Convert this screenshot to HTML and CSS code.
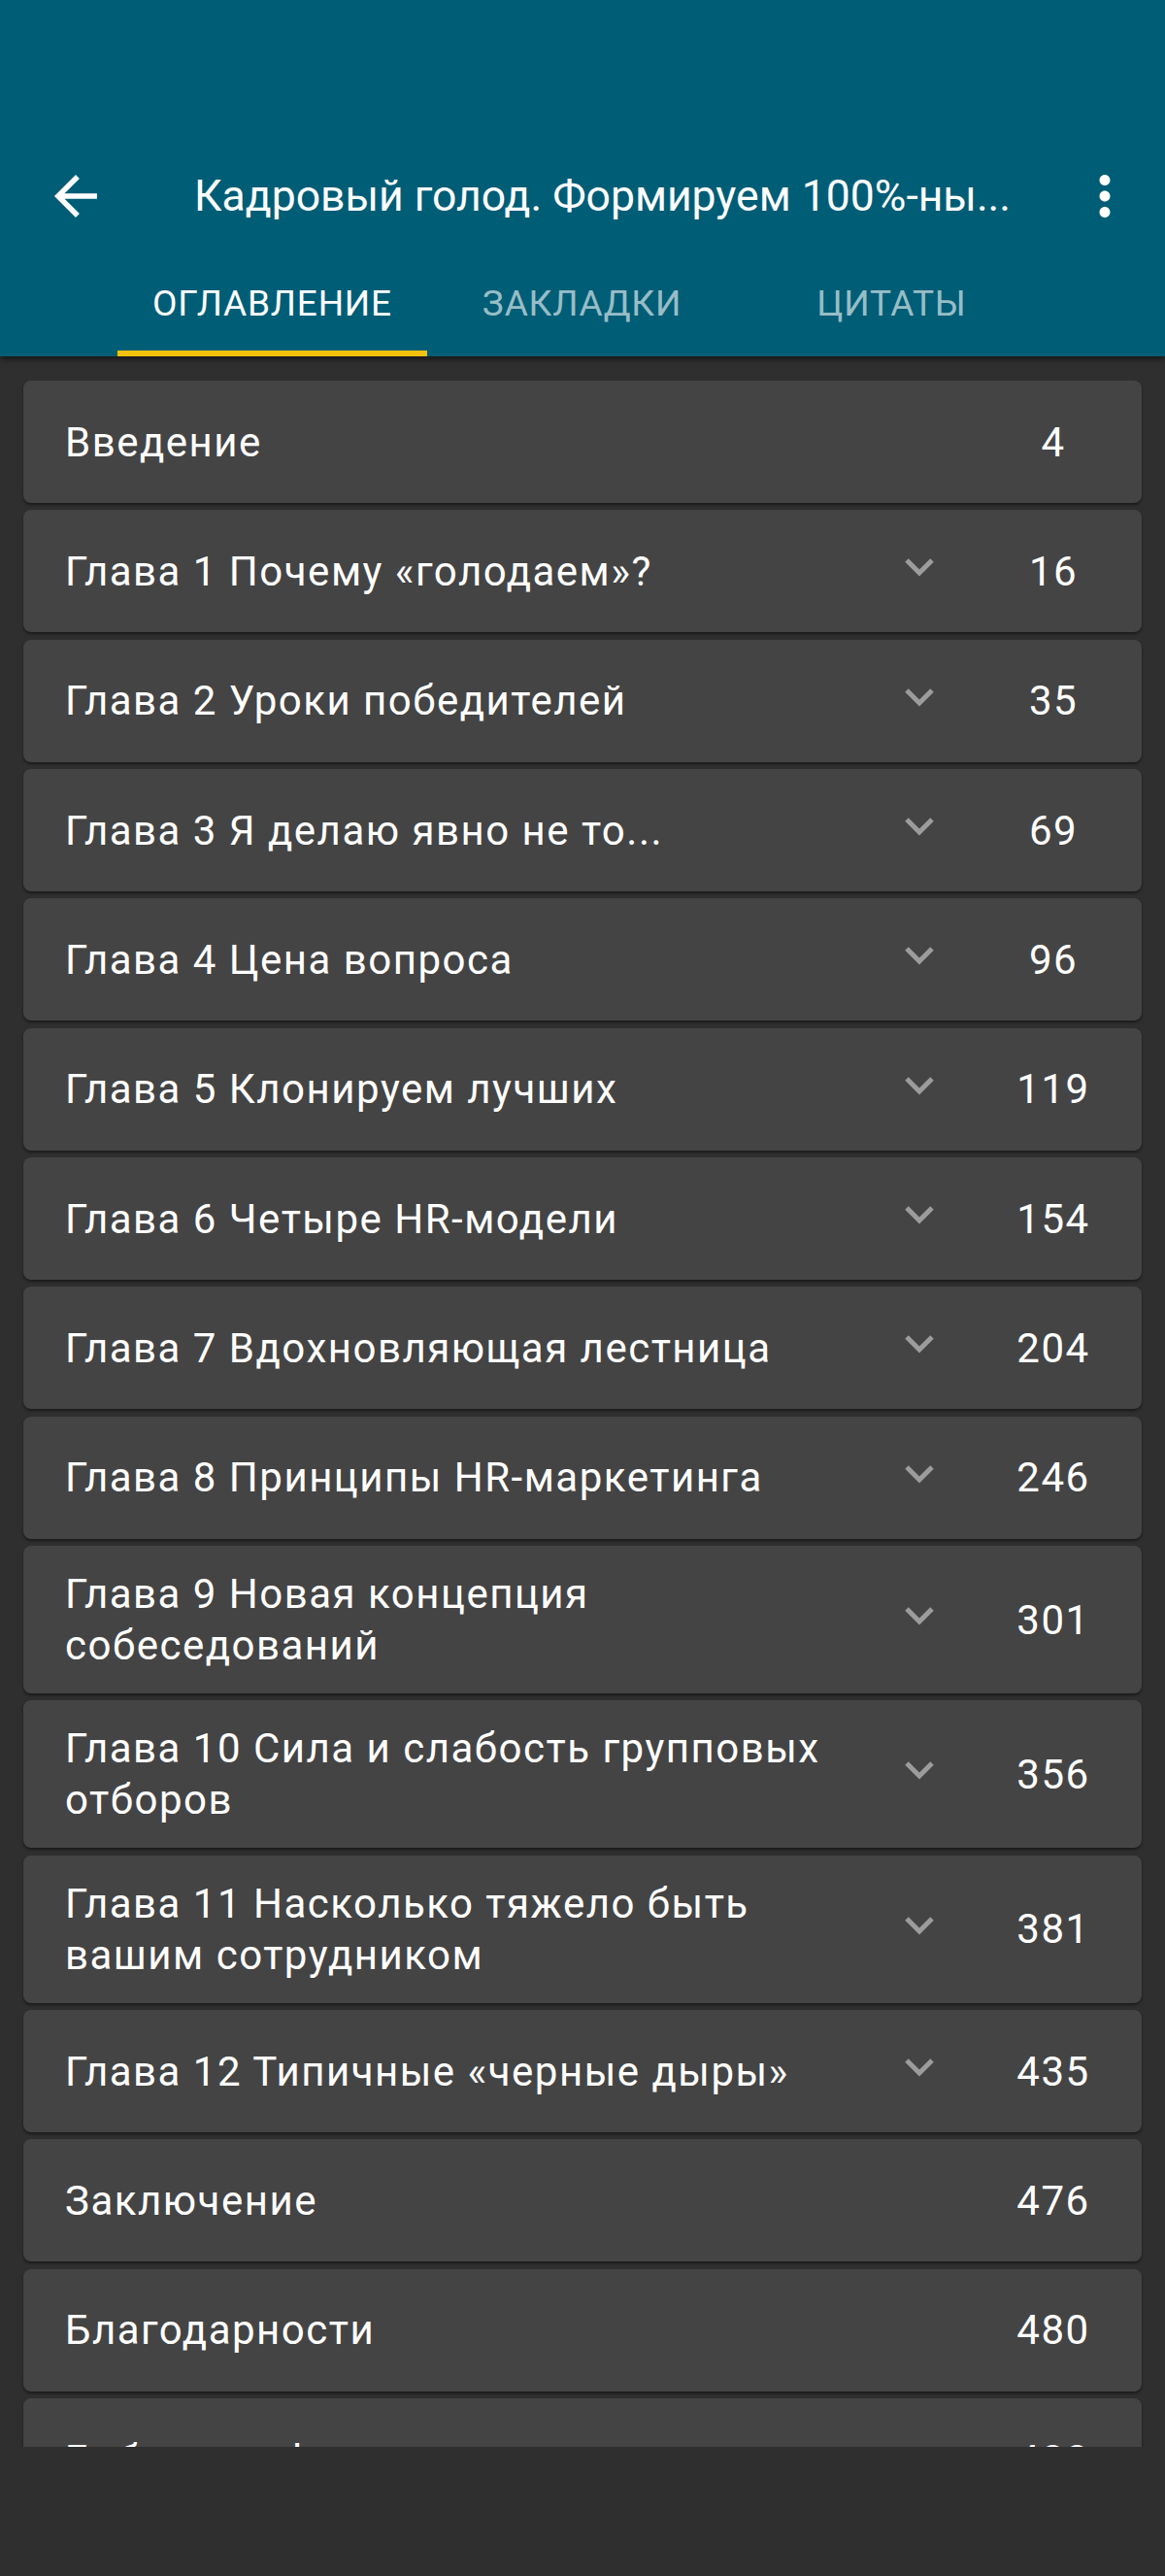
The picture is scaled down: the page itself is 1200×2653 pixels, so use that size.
FILE: index.html
```html
<!doctype html>
<html lang="ru">
<head>
  <title>Оглавление</title>
  <meta charset="utf-8">
  <link rel="stylesheet" href="styles.css">
</head>
<body>

<div id="header">
  <div class="toolbar">
    <svg class="icon back" viewBox="0 0 24 24"><path d="M20 11H7.83l5.59-5.59L12 4l-8 8 8 8 1.41-1.41L7.83 13H20v-2z"/></svg>
    <div class="title">Кадровый голод. Формируем 100%-ны...</div>
    <svg class="icon more" viewBox="0 0 24 24"><path d="M12 8c1.1 0 2-.9 2-2s-.9-2-2-2-2 .9-2 2 .9 2 2 2zm0 2c-1.1 0-2 .9-2 2s.9 2 2 2 2-.9 2-2-.9-2-2-2zm0 6c-1.1 0-2 .9-2 2s.9 2 2 2 2-.9 2-2-.9-2-2-2z"/></svg>
  </div>
  <div class="tabs">
    <div class="tab active">Оглавление</div>
    <div class="tab">Закладки</div>
    <div class="tab">Цитаты</div>
  </div>
</div>

<div id="toc">
  <div class="row">
    <div class="name">Введение</div>
    <div class="page">4</div>
  </div>
  <div class="row">
    <div class="name">Глава 1 Почему «голодаем»?</div>
    <div class="chev"><svg viewBox="0 0 32 20"><path d="M3 3l13 13L29 3"/></svg></div>
    <div class="page">16</div>
  </div>
  <div class="row">
    <div class="name">Глава 2 Уроки победителей</div>
    <div class="chev"><svg viewBox="0 0 32 20"><path d="M3 3l13 13L29 3"/></svg></div>
    <div class="page">35</div>
  </div>
  <div class="row">
    <div class="name">Глава 3 Я делаю явно не то...</div>
    <div class="chev"><svg viewBox="0 0 32 20"><path d="M3 3l13 13L29 3"/></svg></div>
    <div class="page">69</div>
  </div>
  <div class="row">
    <div class="name">Глава 4 Цена вопроса</div>
    <div class="chev"><svg viewBox="0 0 32 20"><path d="M3 3l13 13L29 3"/></svg></div>
    <div class="page">96</div>
  </div>
  <div class="row">
    <div class="name">Глава 5 Клонируем лучших</div>
    <div class="chev"><svg viewBox="0 0 32 20"><path d="M3 3l13 13L29 3"/></svg></div>
    <div class="page">119</div>
  </div>
  <div class="row">
    <div class="name">Глава 6 Четыре HR-модели</div>
    <div class="chev"><svg viewBox="0 0 32 20"><path d="M3 3l13 13L29 3"/></svg></div>
    <div class="page">154</div>
  </div>
  <div class="row">
    <div class="name">Глава 7 Вдохновляющая лестница</div>
    <div class="chev"><svg viewBox="0 0 32 20"><path d="M3 3l13 13L29 3"/></svg></div>
    <div class="page">204</div>
  </div>
  <div class="row">
    <div class="name">Глава 8 Принципы HR-маркетинга</div>
    <div class="chev"><svg viewBox="0 0 32 20"><path d="M3 3l13 13L29 3"/></svg></div>
    <div class="page">246</div>
  </div>
  <div class="row">
    <div class="name">Глава 9 Новая концепция собеседований</div>
    <div class="chev"><svg viewBox="0 0 32 20"><path d="M3 3l13 13L29 3"/></svg></div>
    <div class="page">301</div>
  </div>
  <div class="row">
    <div class="name">Глава 10 Сила и слабость групповых отборов</div>
    <div class="chev"><svg viewBox="0 0 32 20"><path d="M3 3l13 13L29 3"/></svg></div>
    <div class="page">356</div>
  </div>
  <div class="row">
    <div class="name">Глава 11 Насколько тяжело быть вашим сотрудником</div>
    <div class="chev"><svg viewBox="0 0 32 20"><path d="M3 3l13 13L29 3"/></svg></div>
    <div class="page">381</div>
  </div>
  <div class="row">
    <div class="name">Глава 12 Типичные «черные дыры»</div>
    <div class="chev"><svg viewBox="0 0 32 20"><path d="M3 3l13 13L29 3"/></svg></div>
    <div class="page">435</div>
  </div>
  <div class="row">
    <div class="name">Заключение</div>
    <div class="page">476</div>
  </div>
  <div class="row">
    <div class="name">Благодарности</div>
    <div class="page">480</div>
  </div>
  <div class="row">
    <div class="name">Библиография</div>
    <div class="page">488</div>
  </div>
</div>

<div id="bottom"></div>

</body>
</html>
```

FILE: styles.css
```css
html {
  height: 100%;
}

body {
  margin: 0;
  padding: 0;
  background: #2f2f2f;
  color: #ffffff;
  font-family: Roboto, "Noto Sans", sans-serif;
  height: 2653px;
  overflow: hidden;
}

#header {
  background: #005d76;
  padding-top: 138px;
  box-shadow: 0 3px 6px rgba(0, 0, 0, 0.5);
  position: relative;
  z-index: 2;
}

.toolbar {
  display: flex;
  align-items: center;
  height: 128px;
  padding: 0 29px 0 45px;
}

.icon {
  width: 66px;
  height: 66px;
  fill: #ffffff;
  flex: none;
}

.toolbar .title {
  flex: 1;
  margin-left: 89px;
  font-size: 44.5px;
  white-space: nowrap;
  overflow: hidden;
}

.tabs {
  display: flex;
  height: 101px;
  padding-left: 121px;
}

.tab {
  width: 319px;
  display: flex;
  align-items: center;
  justify-content: center;
  padding-bottom: 3px;
  border-bottom: 6px solid transparent;
  box-sizing: border-box;
  font-size: 37px;
  letter-spacing: 0.8px;
  text-transform: uppercase;
  color: rgba(255, 255, 255, 0.62);
}

.tab.active {
  color: #ffffff;
  border-bottom-color: #f4c20d;
}

#toc {
  height: 2153px;
  overflow: hidden;
  padding: 25px 24px 0;
  box-sizing: border-box;
  display: flex;
  flex-direction: column;
  gap: 7.35px;
}

.row {
  flex: none;
  display: flex;
  align-items: center;
  min-height: 126px;
  box-sizing: border-box;
  padding: 23px 36px 23px 43px;
  background: #444444;
  border-radius: 8px;
  box-shadow: 0 2px 3px rgba(0, 0, 0, 0.45);
  font-size: 42px;
  letter-spacing: 1.5px;
  line-height: 53px;
}

.row .name {
  flex: 1;
  padding-right: 10px;
}

.chev {
  width: 80px;
  margin-right: 43px;
  display: flex;
  justify-content: center;
  margin-top: -8px;
}

.chev svg {
  width: 32px;
  height: 20px;
  fill: none;
  stroke: #9c9c9c;
  stroke-width: 5;
}

.row .page {
  width: 110px;
  text-align: center;
}

#bottom {
  height: 133px;
  background: #2f2f2f;
}
```
